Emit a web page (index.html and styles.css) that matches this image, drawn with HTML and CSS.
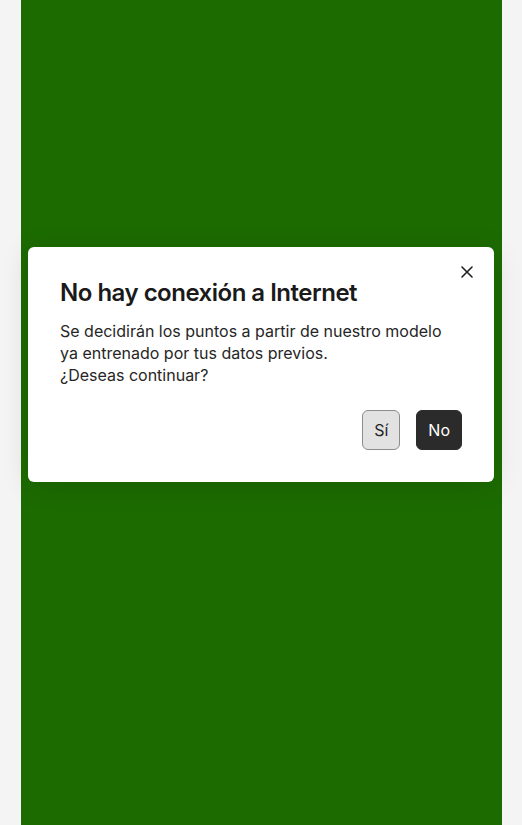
FILE: index.html
```html
<!DOCTYPE html>
<html lang="es">
<head>
<meta charset="utf-8">
<link rel="stylesheet" href="styles.css">
</head>
<body>
<div class="page">
  <main class="column">
    <section class="dialog" role="dialog">
      <button class="close" aria-label="Cerrar">
        <svg width="12" height="12" viewBox="0 0 12 12"><path d="M1 1 L11 11 M11 1 L1 11" stroke="#1f1f1f" stroke-width="1.6" stroke-linecap="round" fill="none"/></svg>
      </button>
      <h2 class="title">No hay conexión a Internet</h2>
      <p class="text">Se decidirán los puntos a partir de nuestro modelo<br>ya entrenado por tus datos previos.<br>¿Deseas continuar?</p>
      <div class="actions">
        <button class="btn btn-secondary">Sí</button>
        <button class="btn btn-primary">No</button>
      </div>
    </section>
  </main>
</div>
</body>
</html>
```

FILE: styles.css
```css
html, body {
  margin: 0;
  padding: 0;
  height: 100%;
}
body {
  background: #f4f4f4;
  font-family: Inter, "Noto Sans", sans-serif;
}
.page {
  height: 825px;
  overflow: hidden;
}
.column {
  margin-left: 21px;
  width: 481px;
  height: 825px;
  background: #1c6b00;
  padding: 247px 8px 0 7px;
  box-sizing: border-box;
}
.dialog {
  position: relative;
  background: #ffffff;
  border-radius: 6px;
  padding: 30px 32px 32px 32px;
  box-shadow: 0 4px 28px rgba(0, 0, 0, 0.12);
}
.close {
  position: absolute;
  top: 17px;
  right: 19px;
  width: 16px;
  height: 16px;
  padding: 0;
  border: 0;
  background: none;
  display: flex;
  align-items: center;
  justify-content: center;
}
.title {
  margin: 0;
  font-size: 24px;
  line-height: 32px;
  font-weight: 600;
  color: #1a1a1a;
  letter-spacing: -0.5px;
}
.text {
  margin: 11px 0 0 0;
  font-size: 16px;
  line-height: 22px;
  color: #262626;
}
.actions {
  display: flex;
  justify-content: flex-end;
  gap: 16px;
  margin-top: 24px;
}
.btn {
  height: 40px;
  padding: 0 11px;
  border-radius: 6px;
  font-family: Inter, "Noto Sans", sans-serif;
  font-size: 16px;
  box-sizing: border-box;
}
.btn-secondary {
  background: #e2e2e2;
  border: 1px solid #8c8c8c;
  color: #262626;
}
.btn-primary {
  background: #2b2b2b;
  border: 1px solid #2b2b2b;
  color: #ffffff;
}
```
